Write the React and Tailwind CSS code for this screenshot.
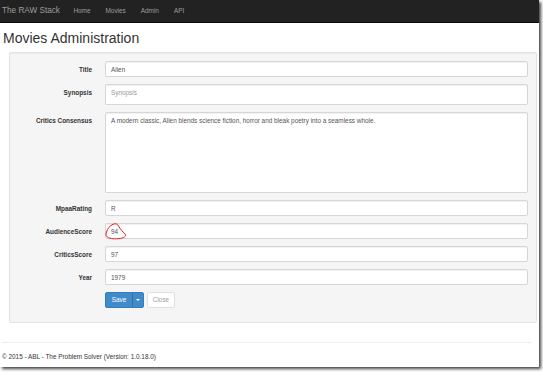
import React from "react";

const rows = [
  { label: "Title", value: "Alien", h: "h-[16px]" },
  { label: "Synopsis", placeholder: "Synopsis", h: "h-[21px]", area: true },
  {
    label: "Critics Consensus",
    value: "A modern classic, Alien blends science fiction, horror and bleak poetry into a seamless whole.",
    h: "h-[81px]",
    area: true,
  },
  { label: "MpaaRating", value: "R", h: "h-[16px]" },
  { label: "AudienceScore", value: "94", h: "h-[16px]", marked: true },
  { label: "CriticsScore", value: "97", h: "h-[16px]" },
  { label: "Year", value: "1979", h: "h-[16px]" },
];

function Field({ row }) {
  return (
    <div className="flex items-start">
      <label className="w-[74px] shrink-0 pt-[3.5px] text-right text-[6.4px] leading-[9px] font-bold text-[#333]">
        {row.label}
      </label>
      <div className="relative ml-[13px] flex-1">
        <div
          className={`${row.h} rounded-[2px] border border-[#d6d6d6] bg-white px-[5px] text-[6.4px] leading-[9px] text-[#555] shadow-[inset_0_1px_1px_rgba(0,0,0,0.06)] ${
            row.area ? "pt-[2.7px]" : "flex items-center"
          }`}
        >
          {row.value ? <span>{row.value}</span> : <span className="text-[#999]">{row.placeholder}</span>}
        </div>
        {row.marked && (
          <svg className="absolute left-[-6px] top-[-3px]" width="32" height="24" viewBox="0 0 32 24" fill="none">
            <path
              d="M7.5 12 C8.5 8.5 11 5.5 14 4.3 C16.5 3.3 18.5 3.6 19.5 6 C21 9 24.5 12.5 26.5 14.5 C27.5 17 23 18.6 17.5 18.8 C12.5 19 8.5 18 7.3 16 C6.8 14.8 7 13.5 7.5 12"
              stroke="#e8202a"
              strokeWidth="1"
              strokeLinecap="round"
            />
          </svg>
        )}
      </div>
    </div>
  );
}

export default function App() {
  return (
    <div className="h-[372px] w-[543px] bg-white font-['Liberation_Sans',Arial,sans-serif]">
      <div className="h-[367px] w-[539px] bg-white shadow-[2px_2px_3px_rgba(0,0,0,0.75)]">
        {/* navbar */}
        <div className="flex h-[23px] items-center border-b border-[#080808] bg-[#222] text-[#9d9d9d]">
          <span className="ml-[2px] text-[8.2px] leading-none">The RAW Stack</span>
          <nav className="ml-[6px] flex text-[6.4px] leading-none">
            {["Home", "Movies", "Admin", "API"].map((item) => (
              <span key={item} className="px-[7.5px]">
                {item}
              </span>
            ))}
          </nav>
        </div>

        <h2 className="ml-[3px] mt-[8px] mb-[6px] text-[14px] leading-[15px] text-[#333]">Movies Administration</h2>

        {/* well */}
        <div className="ml-[9px] w-[528px] rounded-[2px] border border-[#e3e3e3] bg-[#f5f5f5] px-[8px] pt-[8px] pb-[14px] shadow-[inset_0_1px_1px_rgba(0,0,0,0.04)]">
          <div className="flex flex-col gap-[7px]">
            {rows.map((row) => (
              <Field key={row.label} row={row} />
            ))}
            <div className="flex">
              <div className="w-[74px] shrink-0" />
              <div className="ml-[13px] flex gap-[3px]">
                <div className="flex h-[16px] rounded-[2px] border border-[#357ebd] bg-[#428bca] text-[6.4px] text-white">
                  <span className="flex w-[26px] items-center justify-center">Save</span>
                  <span className="flex w-[11px] items-center justify-center border-l border-[#3071a9]">
                    <span className="h-0 w-0 border-x-[2px] border-t-[2px] border-x-transparent border-t-white" />
                  </span>
                </div>
                <div className="flex h-[16px] w-[28px] items-center justify-center rounded-[2px] border border-[#e0e0e0] bg-white text-[6.4px] text-[#a0a0a0]">
                  Close
                </div>
              </div>
            </div>
          </div>
        </div>

        {/* footer */}
        <div className="ml-[2px] mt-[19px] w-[530px] border-t border-[#eee]" />
        <p className="ml-[2px] mt-[9px] text-[6.4px] leading-[9px] text-[#333]">
          © 2015 - ABL - The Problem Solver (Version: 1.0.18.0)
        </p>
      </div>
    </div>
  );
}
